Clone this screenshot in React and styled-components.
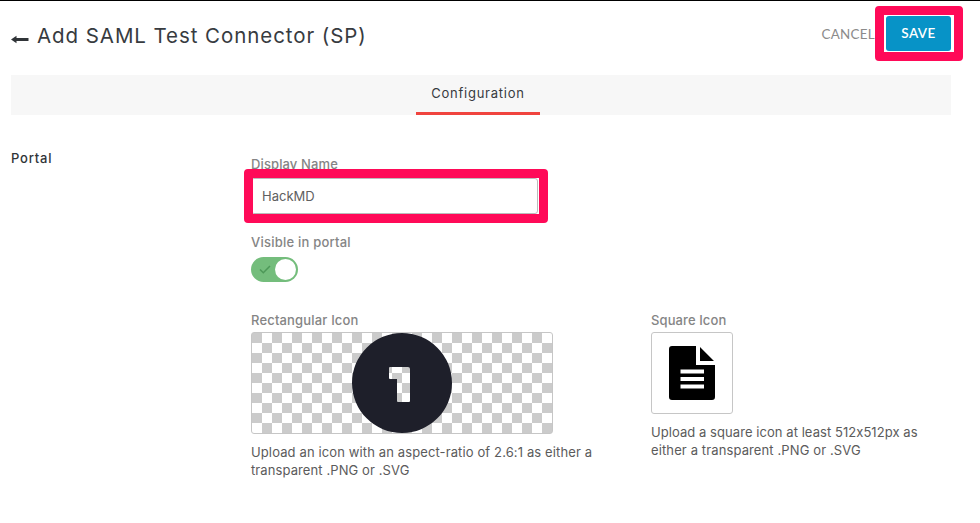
import React from "react";
import styled, { createGlobalStyle } from "styled-components";

const GlobalStyle = createGlobalStyle`
  * { box-sizing: border-box; }
  body { margin: 0; background: #fff; font-family: Inter, "Open Sans", sans-serif; font-size: 13px; color: #555; }
  h1, h2, p { margin: 0; font-weight: 400; }
`;

const Page = styled.div`
  width: 980px;
  height: 523px;
  border-top: 1px solid #000;
  padding: 0 29px 0 11px;
  overflow: hidden;
`;
const Header = styled.header`
  height: 74px;
  display: flex;
  align-items: flex-start;
  justify-content: space-between;
`;
const Heading = styled.div`
  display: flex;
  padding-top: 22px;
`;
const BackArrow = styled.svg`
  width: 18px;
  height: 9px;
  margin: 12px 8px 0 0;
`;
const Title = styled.h1`
  color: #373b3f;
  font-size: 20.5px;
  line-height: 26px;
  white-space: nowrap;
`;
const Actions = styled.div`
  display: flex;
  align-items: center;
  padding-top: 15px;
`;
const TextButton = styled.button`
  border: 0;
  padding: 0;
  margin-right: 11px;
  background: none;
  color: #8b8b8b;
  font: 13.4px Lato, sans-serif;
  letter-spacing: 0.3px;
`;
const Highlight = styled.span`
  position: absolute;
  inset: ${(p) => p.$inset};
  border: ${(p) => p.$edge}px solid #ff0a58;
  border-radius: 4px;
  pointer-events: none;
`;
const SaveWrap = styled.div`
  position: relative;
  display: flex;
`;
const SaveButton = styled.button`
  width: 65px;
  height: 35px;
  border: 0;
  border-radius: 3px;
  padding: 0 0 1px;
  background: #0793c7;
  color: #fff;
  font: 600 13.5px Lato, sans-serif;
  letter-spacing: 0.4px;
`;
const TabBar = styled.nav`
  height: 40px;
  display: flex;
  padding-left: 405px;
  background: #f7f7f7;
`;
const Tab = styled.div`
  width: 124px;
  height: 40px;
  border-bottom: 3px solid #f0443e;
  color: #373b3f;
  line-height: 37px;
  display: flex;
  justify-content: center;
`;
const Section = styled.section`
  display: grid;
  grid-template-columns: 240px 1fr;
`;
const SectionTitle = styled.h2`
  padding-top: 34px;
  font-size: 13px;
  font-weight: 500;
  line-height: 18px;
  color: #303438;
`;
const Fields = styled.div`
  padding-top: 40px;
`;
const Label = styled.div`
  height: 18px;
  line-height: 18px;
  color: #858585;
  font-weight: 500;
  white-space: nowrap;
`;
const InputWrap = styled.div`
  position: relative;
  width: 287px;
  height: 36px;
  margin: 5px 0 19px;
`;
const Input = styled.input`
  display: block;
  width: 287px;
  height: 36px;
  padding: 0 0 0 10px;
  border: 1px solid #bbb;
  border-radius: 3px;
  outline: 0;
  color: #606060;
  font: 13px Inter, sans-serif;
`;
const Toggle = styled.div`
  width: 47px;
  height: 25px;
  margin: 6px 0 29px;
  padding: 0 2px 0 8px;
  display: flex;
  align-items: center;
  justify-content: space-between;
  border-radius: 13px;
  background: #74bd7c;
`;
const Check = styled.svg`
  width: 12px;
  height: 9px;
`;
const Knob = styled.span`
  width: 21px;
  height: 21px;
  border-radius: 50%;
  background: #fff;
`;
const Icons = styled.div`
  display: grid;
  grid-template-columns: 400px 1fr;
`;
const Preview = styled.div`
  width: ${(p) => p.$w}px;
  height: ${(p) => p.$h}px;
  margin: 3px 0 9px;
  border: 1px solid #c6c6c6;
  border-radius: 3px;
  display: flex;
  align-items: center;
  justify-content: center;
  overflow: hidden;
  background: ${(p) =>
    p.$checker
      ? "repeating-conic-gradient(#fff 0 25%, #cbcbcb 0 50%) 0 0 / 20px 20px"
      : "#fff"};
`;
const Help = styled.p`
  line-height: 18px;
  white-space: nowrap;
  color: #5b5b5b;
`;
const Track = styled.span`
  letter-spacing: ${(p) => p.$v}px;
`;

export default function App() {
  return (
    <Page>
      <GlobalStyle />
      <Header>
        <Heading>
          <BackArrow viewBox="0 0 18 9">
            <path d="M0 4.5 5.5 0.7V3.1H17.5V5.9H5.5V8.3Z" fill="#303438" />
          </BackArrow>
          <Title><Track $v={0.93}>Add SAML Test Connector (SP)</Track></Title>
        </Heading>
        <Actions>
          <TextButton>CANCEL</TextButton>
          <SaveWrap>
            <SaveButton>SAVE</SaveButton>
            <Highlight $inset="-10px -12px -10px -11px" $edge={9} />
          </SaveWrap>
        </Actions>
      </Header>
      <TabBar>
        <Tab><Track $v={0.75}>Configuration</Track></Tab>
      </TabBar>
      <Section>
        <SectionTitle><Track $v={0.8}>Portal</Track></SectionTitle>
        <Fields>
          <Label><Track $v={0.12}>Display Name</Track></Label>
          <InputWrap>
            <Input defaultValue="HackMD" />
            <Highlight $inset="-9px -10px -9px -7px" $edge={9} />
          </InputWrap>
          <Label><Track $v={0.22}>Visible in portal</Track></Label>
          <Toggle>
            <Check viewBox="0 0 12 9">
              <path d="M1 4.5 4.3 7.7 11 1" fill="none" stroke="#4d9858" strokeWidth="1.5" />
            </Check>
            <Knob />
          </Toggle>
          <Icons>
            <div>
              <Label><Track $v={0.17}>Rectangular Icon</Track></Label>
              <Preview $w={302} $h={102} $checker>
                <svg width="100" height="100" viewBox="0 0 100 100">
                  <path
                    fillRule="evenodd"
                    fill="#1e1f2a"
                    d="M50 0a50 50 0 1 0 0 100a50 50 0 1 0 0-100ZM38 34H56Q58 34 58 36V68Q58 69 57 69H46Q45 69 45 68V46H38Q37 46 37 45V35Q37 34 38 34Z"
                  />
                </svg>
              </Preview>
              <Help>
                <Track $v={0.12}>Upload an icon with an aspect-ratio of 2.6:1 as either a</Track><br />
                <Track $v={0.1}>transparent .PNG or .SVG</Track>
              </Help>
            </div>
            <div>
              <Label><Track $v={0.1}>Square Icon</Track></Label>
              <Preview $w={82} $h={82}>
                <svg width="46" height="54" viewBox="0 0 46 54">
                  <path
                    fill="#000"
                    d="M3 0H27V19H46V51Q46 54 43 54H3Q0 54 0 51V3Q0 0 3 0ZM31 1 45 15H31Z"
                  />
                  <path d="M11.5 25.5H35M11.5 33H35M11.5 40.5H35" stroke="#fff" strokeWidth="4" />
                </svg>
              </Preview>
              <Help>
                <Track $v={0.06}>Upload a square icon at least 512x512px as</Track><br />
                <Track $v={0.12}>either a transparent .PNG or .SVG</Track>
              </Help>
            </div>
          </Icons>
        </Fields>
      </Section>
    </Page>
  );
}
